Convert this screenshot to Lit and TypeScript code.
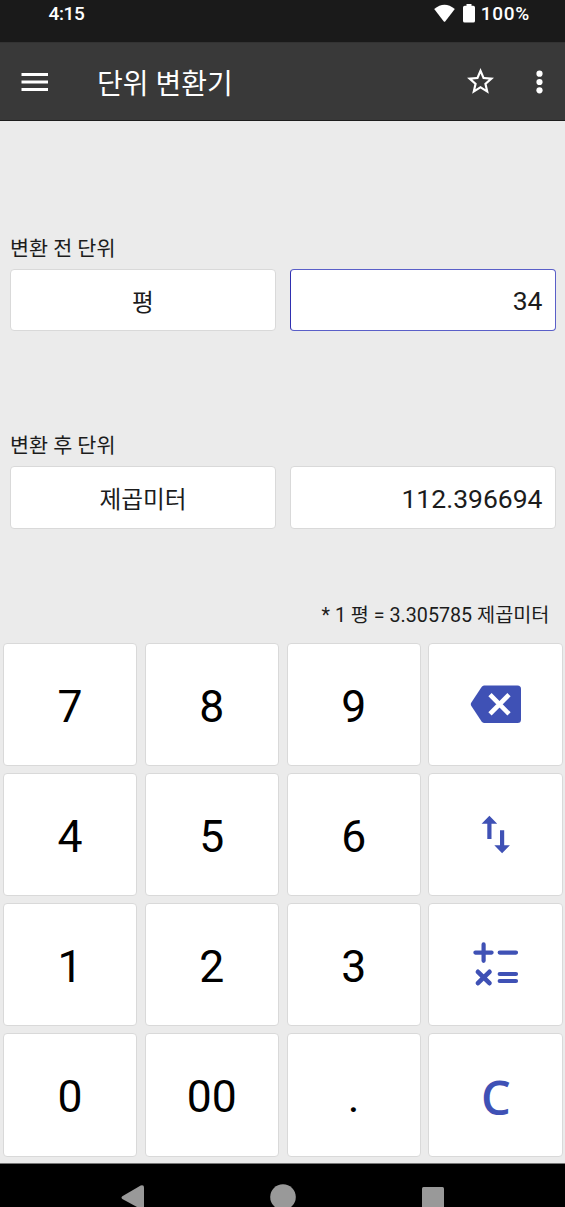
import { LitElement, html, svg, css } from "lit";
import { customElement, state, property } from "lit/decorators.js";

const ICONS: Record<string, unknown> = {
  back: svg`<svg width="134" height="123" viewBox="0 0 134 123" fill="#3f51b5">
    <path d="M56 42.5H89.5Q93 42.5 93 46V76.5Q93 80 89.5 80H56Q54.6 80 53.6 78.6L43.2 62.8Q42.4 61.3 43.2 59.8L53.6 44Q54.6 42.5 56 42.5Z"/>
    <path d="M62 51.7L81 70.9M81 51.7L62 70.9" stroke="#fff" stroke-width="4.6" fill="none"/></svg>`,
  swap: svg`<svg width="134" height="123" viewBox="0 0 134 123" fill="#3f51b5">
    <path d="M61.4 42.8L69.2 50.8H63.5V66H59.3V50.8H53.6Z"/>
    <path d="M74.1 80.3L81.9 72.3H76.2V57.2H72V72.3H66.3Z"/></svg>`,
  calc: svg`<svg width="134" height="123" viewBox="0 0 134 123" fill="none" stroke="#3f51b5" stroke-width="4.2" stroke-linecap="round">
    <path d="M47.4 49.6H63.6M55.6 41.4V57.8M71.7 49.6H88M71.7 71H88M71.7 78H88"/>
    <path d="M49.9 68.8L61.5 80.2M61.5 68.8L49.9 80.2" stroke-width="4.6"/></svg>`,
};

@customElement("keypad-key")
class KeypadKey extends LitElement {
  @property() label = "";
  @property() icon = "";
  static styles = css`
    :host { display: flex; box-sizing: border-box; background: #fff; border: 1px solid #d9d9d9; border-radius: 4px;
      align-items: center; justify-content: center; overflow: hidden; min-width: 0; min-height: 0; }
    .digit { font: 400 44.5px/52px Roboto, sans-serif; color: #000; padding-top: 5px; }
    .clear { font: 600 47px/56px "Open Sans", "Noto Sans", sans-serif; color: #3f51b5; padding: 4px 0 0 1px; }
    svg { display: block; flex: none; }
  `;
  render() {
    if (this.icon) return ICONS[this.icon];
    return html`<span class=${this.label === "C" ? "clear" : "digit"}>${this.label}</span>`;
  }
}

@customElement("app-root")
class AppRoot extends LitElement {
  @state() source = "34";
  @state() result = "112.396694";

  static styles = css`
    :host { display: flex; flex-direction: column; width: 565px; height: 1207px; overflow: hidden; background: #ebebeb;
      font-family: Roboto, "Noto Sans CJK KR", sans-serif; color: #1c1c1c; }
    * { box-sizing: border-box; }
    svg { display: block; flex: none; }
    .status { height: 42px; flex: none; background: #1a1a1a; color: #fff; display: flex; align-items: flex-start;
      padding: 3px 35px 0 48.5px; font-size: 19px; line-height: 22px; font-weight: 500; }
    .time { flex: 1; letter-spacing: -0.4px; }
    .wifi { margin: 0 8px 0 0; }
    .battery { margin: 0 5.5px 0 0; }
    .percent { letter-spacing: 0.7px; }
    .bar { height: 79px; flex: none; background: #393939; border-top: 1px solid #333; border-bottom: 1px solid #1d1d1d;
      display: flex; align-items: center; padding: 0 22px 0 21px; }
    .title { flex: 1; margin-left: 49px; font-size: 28px; line-height: 40px; color: #fff; padding-top: 6px; }
    .star { margin-right: 42px; }
    .units { height: 518.5px; flex: none; padding: 112.5px 9px 0 10px; }
    .label { height: 35px; line-height: 30px; font-size: 20.7px; }
    .pair { display: grid; grid-template-columns: 1fr 1fr; gap: 14px; height: 62.5px; }
    .gap { height: 100px; }
    .box { background: #fff; border: 1px solid #d9d9d9; border-radius: 4px; display: flex; align-items: center; padding: 2px 12.5px 0; }
    .name { justify-content: center; font-size: 23.7px; }
    .value { justify-content: flex-end; font-size: 26.5px; }
    .active { border-color: #5a5fc8; border-left-color: #2f2fb0; }
    .note { text-align: right; font-size: 19.7px; line-height: 28px; margin-top: 73px; padding-right: 6.5px; }
    .keys { flex: none; height: 524px; padding: 3px 2.5px 6px 3px; display: grid; grid-template-columns: repeat(4, 1fr);
      grid-template-rows: repeat(4, 1fr); column-gap: 7.7px; row-gap: 7px; border-bottom: 1px solid #777; }
    .nav { flex: 1; background: #000; display: flex; align-items: flex-start; padding: 20px 0 0 121px; }
    .home { margin-left: 126px; }
    .recent { margin: 3px 0 0 126px; }
    .tri { margin-top: 1px; }
  `;

  render() {
    const keys = ["7", "8", "9", "@back", "4", "5", "6", "@swap", "1", "2", "3", "@calc", "0", "00", ".", "C"];
    return html`
      <div class="status">
        <span class="time">4:15</span>
        <svg class="wifi" width="21" height="19" viewBox="0 0 21 19"><path fill="#fff" d="M0.2 6Q10.5 -2.6 20.8 6L11.2 18.4Q10.5 19 9.8 18.4Z"/></svg>
        <svg class="battery" width="12" height="20" viewBox="0 0 12 20"><path fill="#fff" d="M3.5 1H8.5V2.8H10.3Q12 2.8 12 4.5V18Q12 19.6 10.3 19.6H1.7Q0 19.6 0 18V4.5Q0 2.8 1.7 2.8H3.5Z"/></svg>
        <span class="percent">100%</span>
      </div>
      <div class="bar">
        <svg width="27" height="20" viewBox="0 0 27 20"><path stroke="#fff" stroke-width="3" d="M0.5 2.4H27M0.5 10H27M0.5 17.6H27"/></svg>
        <span class="title">단위 변환기</span>
        <svg class="star" width="27" height="27" viewBox="2 2 20 20"><path fill="#fff" d="M22 9.24l-7.19-.62L12 2 9.19 8.63 2 9.24l5.46 4.73L5.82 21 12 17.27 18.18 21l-1.63-7.03L22 9.24zM12 15.4l-3.76 2.27 1-4.28-3.32-2.88 4.38-.38L12 6.1l1.71 4.04 4.38.38-3.32 2.88 1 4.28L12 15.4z"/></svg>
        <svg width="7" height="24" viewBox="0 0 7 24" fill="#fff"><circle cx="3.5" cy="3.7" r="3.1"/><circle cx="3.5" cy="12" r="3.1"/><circle cx="3.5" cy="20.3" r="3.1"/></svg>
      </div>
      <div class="units">
        <div class="label">변환 전 단위</div>
        <div class="pair"><div class="box name">평</div><div class="box value active">${this.source}</div></div>
        <div class="gap"></div>
        <div class="label">변환 후 단위</div>
        <div class="pair"><div class="box name">제곱미터</div><div class="box value">${this.result}</div></div>
        <div class="note">* 1 평 = 3.305785 제곱미터</div>
      </div>
      <div class="keys">
        ${keys.map((k) => k[0] === "@" ? html`<keypad-key icon=${k.slice(1)}></keypad-key>` : html`<keypad-key label=${k}></keypad-key>`)}
      </div>
      <div class="nav">
        <svg class="tri" width="23" height="25" viewBox="0 0 23 25"><path fill="#999" d="M1.3 11.2L19.7 0.6Q23 -0.4 23 2.6V22Q23 25 19.7 24L1.3 14Q-0.3 12.6 1.3 11.2Z"/></svg>
        <svg class="home" width="26" height="26" viewBox="0 0 26 26"><circle cx="13" cy="13" r="12.8" fill="#999"/></svg>
        <svg class="recent" width="22" height="22" viewBox="0 0 22 22"><rect width="22" height="22" rx="1.5" fill="#999"/></svg>
      </div>`;
  }
}
